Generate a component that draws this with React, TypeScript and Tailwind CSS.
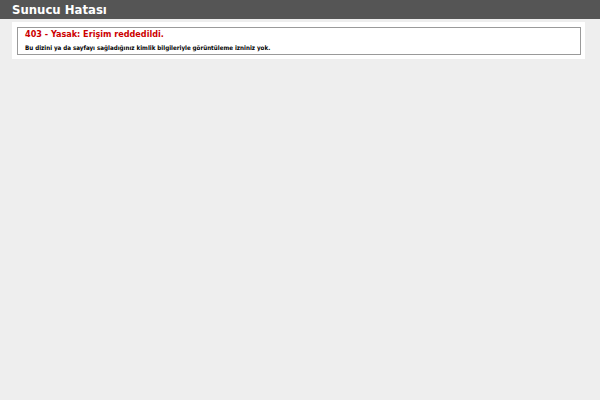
export default function App() {
  return (
    <div className="min-h-[400px] bg-[#eeeeee] font-['DejaVu_Sans_Condensed','DejaVu_Sans',Verdana,sans-serif]">
      <div className="h-[19px] bg-[#555555] pl-[12px] pt-[2px]">
        <h1 className="m-0 text-[13px] font-bold leading-[15px] text-white">Sunucu Hatası</h1>
      </div>
      <div className="ml-[12px] mt-[3px] w-[573px] bg-white pt-[5px] pl-[5px] pr-[4px] pb-[4px]">
        <fieldset className="border border-[#9a9a9a] pl-[7px] pr-[8px] pt-[1px] pb-[3px]">
          <h2 className="m-0 text-[9px] font-bold leading-[11px] text-[#cc0000]">403 - Yasak: Erişim reddedildi.</h2>
          <h3 className="mt-[4px] text-[6.2px] font-bold leading-[7px] text-black">
            Bu dizini ya da sayfayı sağladığınız kimlik bilgileriyle görüntüleme izniniz yok.
          </h3>
        </fieldset>
      </div>
    </div>
  );
}
